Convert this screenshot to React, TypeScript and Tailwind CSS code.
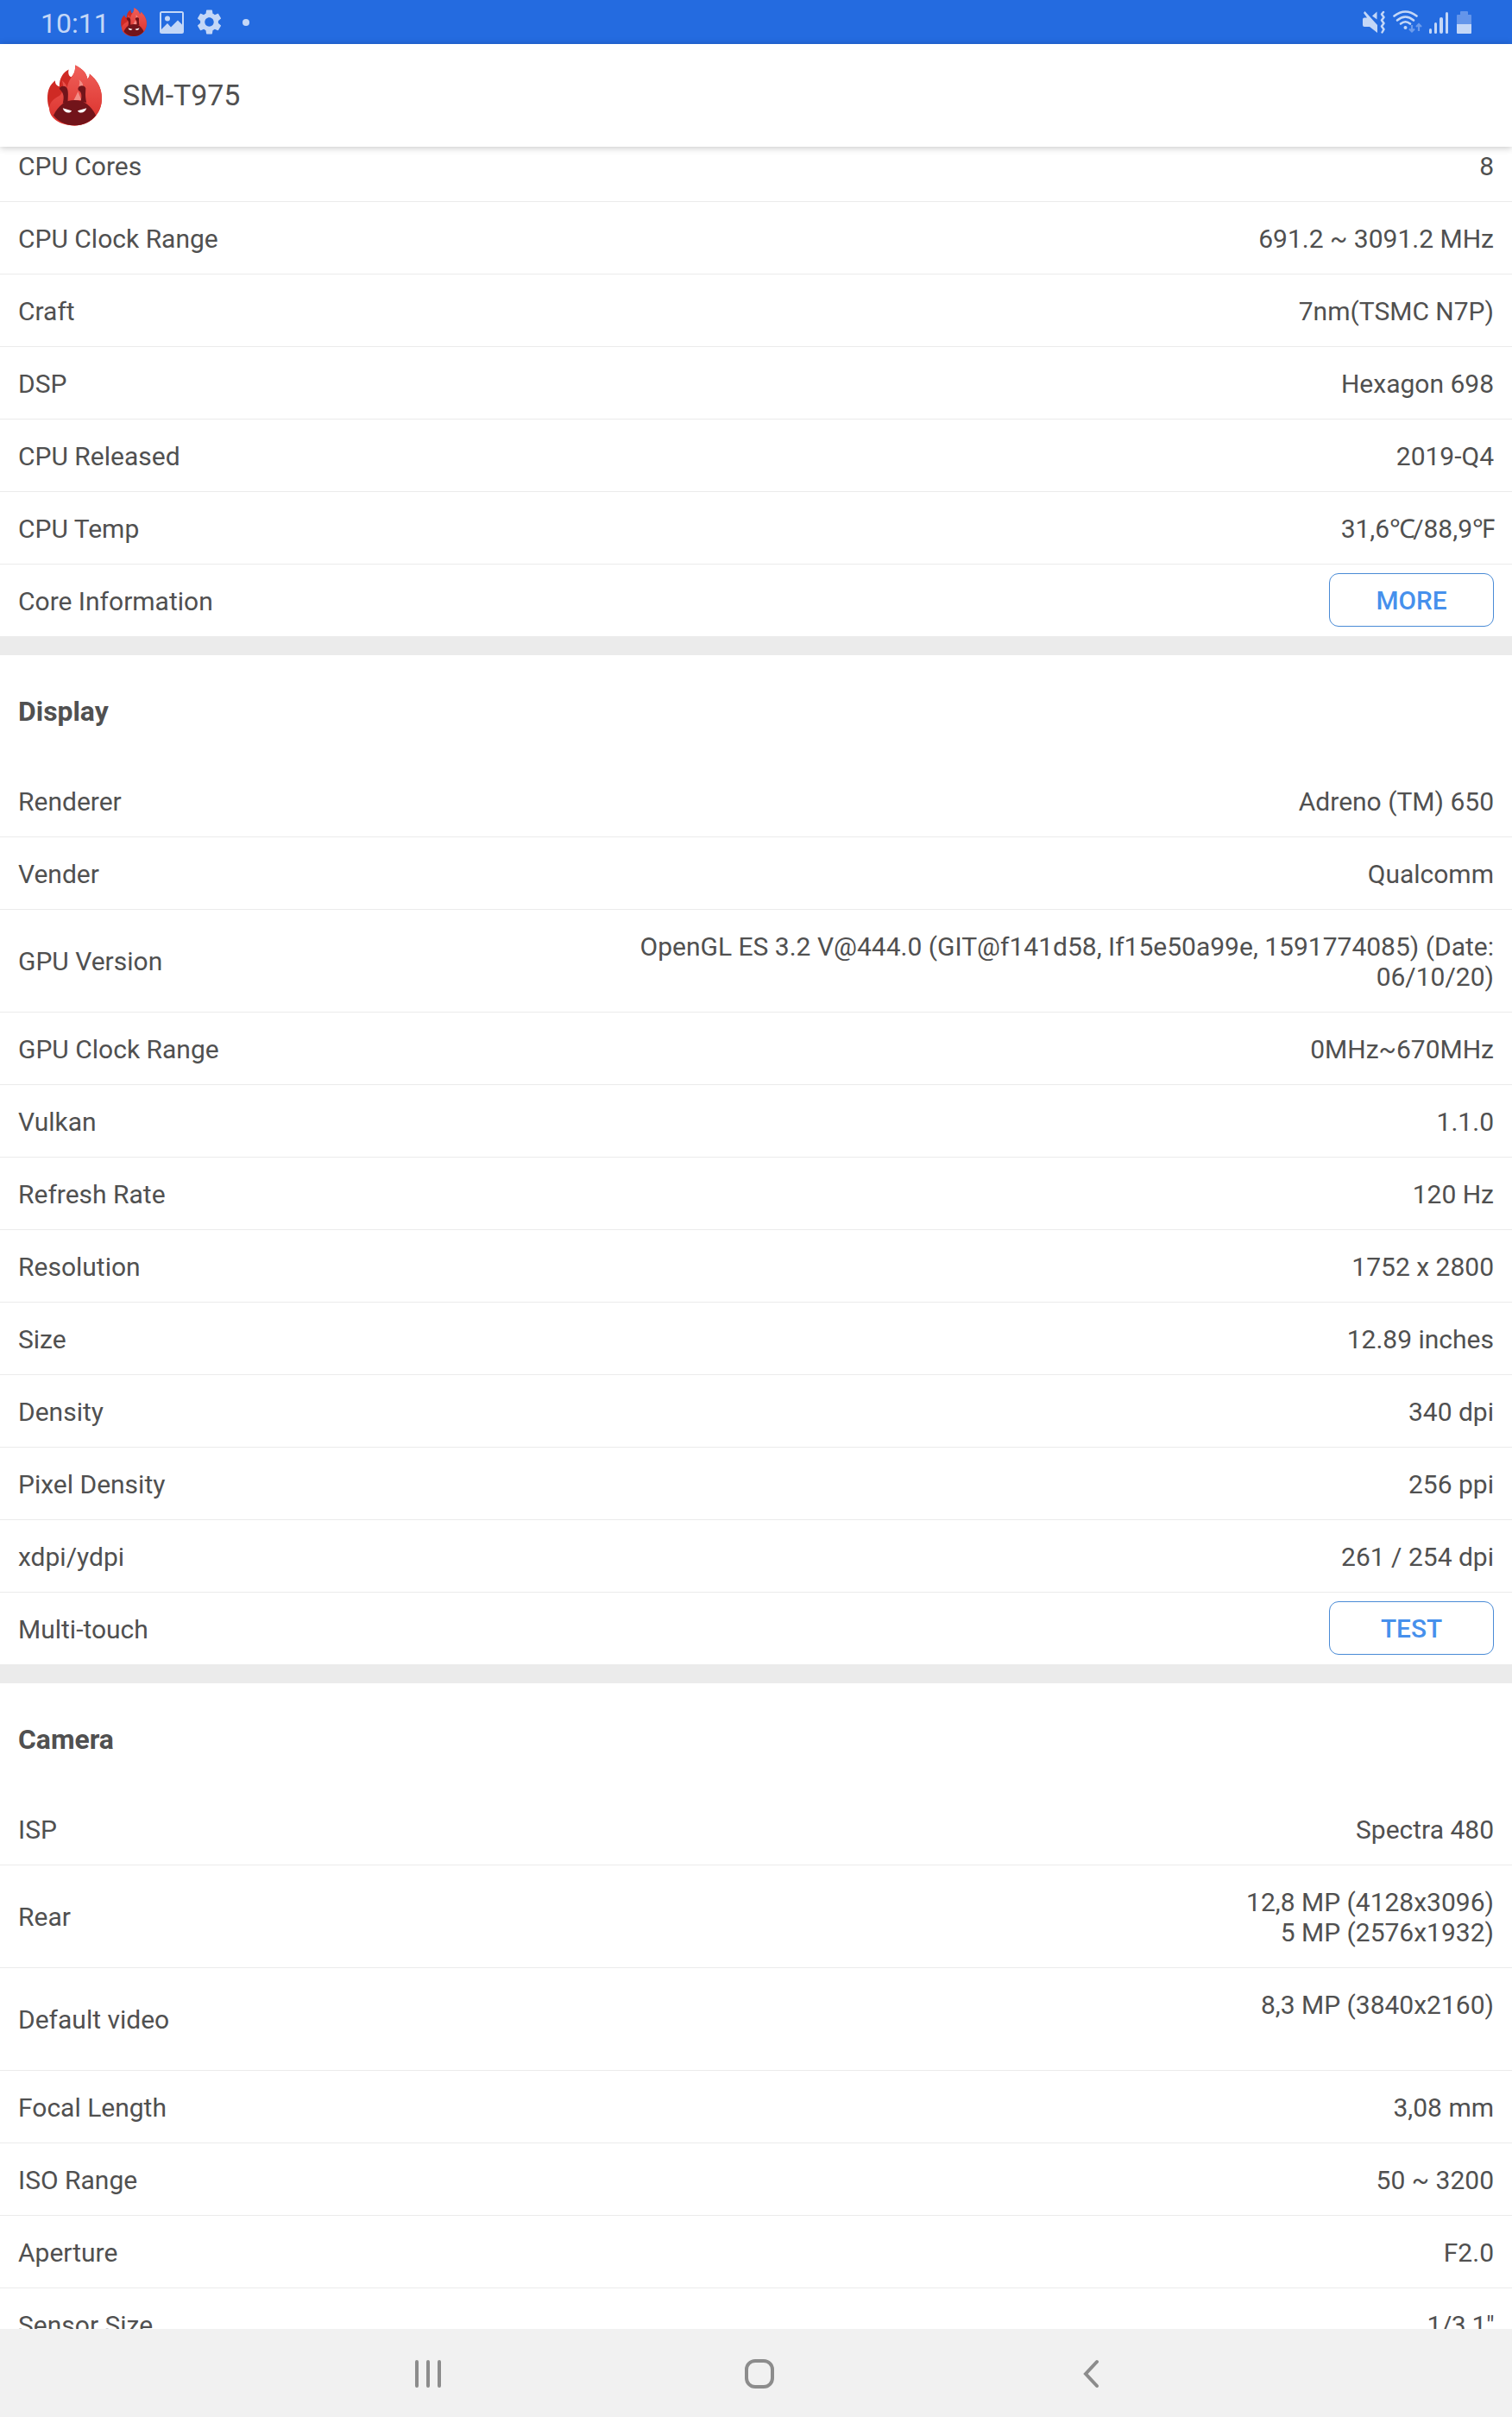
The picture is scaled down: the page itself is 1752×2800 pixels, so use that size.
import type { ReactNode } from 'react';

type Row = {
  label: string;
  value?: ReactNode;
  action?: string;
  tall?: boolean;
};

const cpuRows: Row[] = [
  { label: 'CPU Cores', value: '8' },
  { label: 'CPU Clock Range', value: '691.2 ~ 3091.2 MHz' },
  { label: 'Craft', value: '7nm(TSMC N7P)' },
  { label: 'DSP', value: 'Hexagon 698' },
  { label: 'CPU Released', value: '2019-Q4' },
  {
    label: 'CPU Temp',
    value: (
      <>
        31,6<span className="tracking-[-3px]">℃</span>/88,9<span className="tracking-[-1px]">℉</span>
      </>
    ),
  },
  { label: 'Core Information', action: 'MORE' },
];

const displayRows: Row[] = [
  { label: 'Renderer', value: 'Adreno (TM) 650' },
  { label: 'Vender', value: 'Qualcomm' },
  {
    label: 'GPU Version',
    value: 'OpenGL ES 3.2 V@444.0 (GIT@f141d58, If15e50a99e, 1591774085) (Date:\n06/10/20)',
    tall: true,
  },
  { label: 'GPU Clock Range', value: '0MHz~670MHz' },
  { label: 'Vulkan', value: '1.1.0' },
  { label: 'Refresh Rate', value: '120 Hz' },
  { label: 'Resolution', value: '1752 x 2800' },
  { label: 'Size', value: '12.89 inches' },
  { label: 'Density', value: '340 dpi' },
  { label: 'Pixel Density', value: '256 ppi' },
  { label: 'xdpi/ydpi', value: '261 / 254 dpi' },
  { label: 'Multi-touch', action: 'TEST' },
];

const cameraRows: Row[] = [
  { label: 'ISP', value: 'Spectra 480' },
  { label: 'Rear', value: '12,8 MP (4128x3096)\n5 MP (2576x1932)', tall: true },
  { label: 'Default video', value: '8,3 MP (3840x2160)', tall: true },
  { label: 'Focal Length', value: '3,08 mm' },
  { label: 'ISO Range', value: '50 ~ 3200' },
  { label: 'Aperture', value: 'F2.0' },
  { label: 'Sensor Size', value: <span className="tracking-[-0.5px]">1/3.1"</span> },
];

function AntutuLogo({ className }: { className: string }) {
  return (
    <svg viewBox="0 0 64 71" className={className}>
      <defs>
        <linearGradient id="flame" x1="0" y1="0" x2="0" y2="1">
          <stop offset="0" stopColor="#f0605a" />
          <stop offset="1" stopColor="#da2f2a" />
        </linearGradient>
        <clipPath id="body">
          <path d="M0 0H64V39C64 57 49 71 32 71S0 57 0 39Z" />
        </clipPath>
      </defs>
      {/* Back flame */}
      <path
        d="M32 71C14 71 0 57 0 39C0 29 3 23 9 18C9 21 10 24 14 25C14 15 18 9 25 5C24 9 25 13 28 14C32 10 33 5 32.500 0C41 4 46 9 47 16C49 14 50 12 49.500 10C58 17 64 26 64 39C64 57 50 71 32 71Z"
        fill="#cf2a24"
      />
      {/* Front flame */}
      <path
        d="M32 71C14 71 2 62 2 50C3 42 9 39 14 36C18 33 20 25 17 18C21 21 23 24 23 28C24 20 27 16 29 13C32 9 33 5 32.500 0C41 4 46 9 47 16C49 14 50 12 49.500 10C58 17 64 26 64 39C64 57 50 71 32 71Z"
        fill="url(#flame)"
      />
      <path d="M37 17C41 20 43 23 41 27L37 24C38 22 38 19 37 17Z" fill="#f28d86" />
      <path d="M36 31L40 41H31Z" fill="#f28d86" />
      <g fill="#72141a" clipPath="url(#body)">
        <path d="M7 59C13 47 21 41 32 41S51 47 57 59L50 71H14Z" />
        <path d="M14 28C14 24 21 23 23 27C25 31 24 37 24 44L18 45C20 37 19 33 15 29Z" />
        <path d="M36 27C37 23 44 23 45 27C45 31 44 36 46 44L39 43C41 36 40 32 37 30C36 29 36 28 36 27Z" />
      </g>
      <path d="M18 50.500L28.500 53.500C27 57 20 57 18 50.500Z" fill="#fff" />
      <path d="M46 50.500L35.500 53.500C37 57 44 57 46 50.500Z" fill="#fff" />
    </svg>
  );
}

function StatusBar() {
  return (
    <div className="flex h-[51px] shrink-0 items-center justify-between bg-[#246be0] pl-[47px] pr-[47px] text-[#c4d7f7]">
      <div className="flex items-center">
        <span className="relative top-px w-[93px] text-[32px] leading-[38px]">10:11</span>
        <AntutuLogo className="h-[33px] w-[30px]" />
        <svg viewBox="0 0 28 26" className="ml-[15px] h-[26px] w-7">
          <path
            d="M2.500 0H25.500A2.500 2.500 0 0 1 28 2.500V23.500A2.500 2.500 0 0 1 25.500 26H2.500A2.500 2.500 0 0 1 0 23.500V2.500A2.500 2.500 0 0 1 2.500 0ZM2 2V21L9 14L13 18.500L21 10.500L26 15.500V2Z"
            fill="currentColor"
            fillRule="evenodd"
          />
          <circle cx="9" cy="8.500" r="3" fill="currentColor" />
        </svg>
        <svg viewBox="2 2 20 20" className="ml-[15px] h-[29px] w-[29px]">
          <path
            d="M19.140 12.940c.04-.3.060-.61.060-.94 0-.32-.02-.64-.07-.94l2.030-1.580c.18-.14.230-.41.120-.61l-1.920-3.320c-.12-.22-.37-.29-.59-.22l-2.390.960c-.5-.38-1.030-.7-1.620-.94l-.36-2.540c-.04-.24-.24-.41-.48-.41h-3.840c-.24 0-.43.170-.47.410l-.36 2.540c-.59.240-1.130.570-1.620.940l-2.390-.96c-.22-.08-.47 0-.59.220L2.740 8.870c-.12.210-.08.470.120.610l2.030 1.580c-.05.300-.09.630-.09.940s.02.640.070.940l-2.030 1.580c-.18.140-.23.410-.12.610l1.920 3.320c.12.220.370.290.590.220l2.390-.96c.5.380 1.030.7 1.620.940l.36 2.540c.05.240.240.410.480.410h3.840c.24 0 .44-.17.470-.41l.36-2.540c.59-.24 1.130-.56 1.620-.94l2.390.960c.22.080.470 0 .59-.22l1.920-3.320c.12-.22.070-.47-.12-.61l-2.010-1.580zM12 15.600c-1.980 0-3.600-1.620-3.600-3.600s1.620-3.600 3.600-3.600 3.600 1.620 3.600 3.600-1.620 3.600-3.600 3.600z"
            fill="currentColor"
          />
        </svg>
        <span className="ml-6 h-2 w-2 rounded-full bg-[#c4d7f7]" />
      </div>

      <div className="flex items-center">
        {/* Muted, vibrate */}
        <svg viewBox="0 0 26 27" className="h-[27px] w-[26px]" fill="currentColor">
          <path d="M0 10.500Q0 8.500 2 8.500H5L1 3L2.500 1L17 17V26L8 19H2Q0 19 0 17Z" />
          <path d="M11 6.500L16.500 1.500V10.500Z" />
          <path
            d="M24 2L22 4.500L24.500 8L22 11.500L24.500 15L22 18.500L24.500 22L22.500 25.500"
            fill="none"
            stroke="currentColor"
            strokeWidth="2.500"
            strokeLinecap="round"
            strokeLinejoin="round"
          />
        </svg>
        <svg viewBox="0 0 34 27" className="ml-[9px] h-[27px] w-[34px]" fill="none">
          <g stroke="currentColor" strokeWidth="2.600" strokeLinecap="round">
            <path d="M1.500 6.500Q14.500 -3.500 27.500 6.500" />
            <path d="M5 11.500Q14.500 3.500 24 11.500" />
            <path d="M9 15.500Q14.500 11 20 15.500" />
          </g>
          <circle cx="14.500" cy="20" r="2" fill="currentColor" />
          <g stroke="#6d9ceb" strokeWidth="2.200">
            <path d="M22 17V24.500M19 21.500L22 24.500L25 21.500" />
            <path d="M30 24V16M27 19L30 16L33 19" />
          </g>
        </svg>
        <div className="ml-2 flex h-[26px] items-end gap-[3px]">
          <span className="h-[6px] w-[3px] rounded-full bg-[#c4d7f7]" />
          <span className="h-[13px] w-[3px] rounded-full bg-[#c4d7f7]" />
          <span className="h-[19px] w-[4px] rounded-full bg-[#c4d7f7]" />
          <span className="h-[25px] w-[3px] rounded-full bg-[#c4d7f7]" />
        </div>
        <div className="ml-[10px] flex w-[17px] flex-col items-center">
          <span className="h-1 w-[9px] rounded-t-[1px] bg-[#6495ea]" />
          <span className="h-[11px] w-full rounded-t-[1px] bg-[#6495ea]" />
          <span className="h-[11px] w-full rounded-b-[1px] bg-[#c4d7f7]" />
        </div>
      </div>
    </div>
  );
}

function InfoRow({ row, last }: { row: Row; last: boolean }) {
  return (
    <div
      className={`flex items-center justify-between px-[21px] ${row.tall ? 'h-[119px]' : last ? 'h-[83px]' : 'h-[84px]'} ${
        last ? '' : 'border-b border-[#ebebeb]'
      }`}
    >
      <span className={row.tall ? '' : 'pt-0.5'}>{row.label}</span>
      {row.action ? (
        <button className="mb-[2px] h-[62px] w-[191px] rounded-[11px] border border-[#4a8bd6] pt-px text-[29.75px] font-medium text-[#4690ec]">
          {row.action}
        </button>
      ) : (
        <span className={`whitespace-pre-line pt-0.5 text-right ${row.tall ? 'h-[72px]' : ''}`}>{row.value}</span>
      )}
    </div>
  );
}

function Section({ title, rows }: { title?: string; rows: Row[] }) {
  return (
    <section>
      {title && (
        <h2 className="flex h-[127px] items-center px-[21px] pt-[3px] text-[31.875px] font-bold">{title}</h2>
      )}
      {rows.map((row, i) => (
        <InfoRow key={row.label} row={row} last={i === rows.length - 1} />
      ))}
    </section>
  );
}

function Divider() {
  return <div className="h-[22px] bg-[#ebebeb]" />;
}

function NavButton({ label, children }: { label: string; children: ReactNode }) {
  return (
    <button aria-label={label} className="flex w-96 items-center justify-center">
      {children}
    </button>
  );
}

export default function App() {
  return (
    <div className="flex h-[2800px] w-[1752px] flex-col overflow-hidden bg-white font-['Roboto',sans-serif] text-[30px] leading-[35px] text-[#505050]">
      <StatusBar />

      {/* App header */}
      <header className="relative z-10 flex h-[119px] shrink-0 items-center bg-white pl-[55px] shadow-[0_1px_8px_rgba(0,0,0,0.24)]">
        <AntutuLogo className="h-[71px] w-[63px]" />
        <h1 className="ml-6 pb-0.5 text-[34px] leading-10 tracking-[-0.1px]">SM-T975</h1>
      </header>

      {/* Scrolled list, first row partly under the header */}
      <main className="min-h-0 flex-1 overflow-hidden">
        <div className="-mt-5">
          <Section rows={cpuRows} />
          <Divider />
          <Section title="Display" rows={displayRows} />
          <Divider />
          <Section title="Camera" rows={cameraRows} />
        </div>
      </main>

      {/* System navigation */}
      <nav className="relative z-10 flex h-[102px] shrink-0 justify-center bg-[#f1f1f1] pl-[7px] pt-px">
        <NavButton label="Recents">
          <svg viewBox="0 0 32 34" className="h-[34px] w-8" stroke="#8c8c8c" strokeWidth="4" strokeLinecap="round">
            <path d="M3 3V31M16 3V31M29 3V31" />
          </svg>
        </NavButton>
        <NavButton label="Home">
          <span className="h-[34px] w-[34px] rounded-[12px] border-4 border-[#8c8c8c]" />
        </NavButton>
        <NavButton label="Back">
          <svg viewBox="0 0 20 34" className="h-[34px] w-5" fill="none" stroke="#8c8c8c" strokeWidth="4" strokeLinecap="round">
            <path d="M17 3L4 17L17 31" />
          </svg>
        </NavButton>
      </nav>
    </div>
  );
}
